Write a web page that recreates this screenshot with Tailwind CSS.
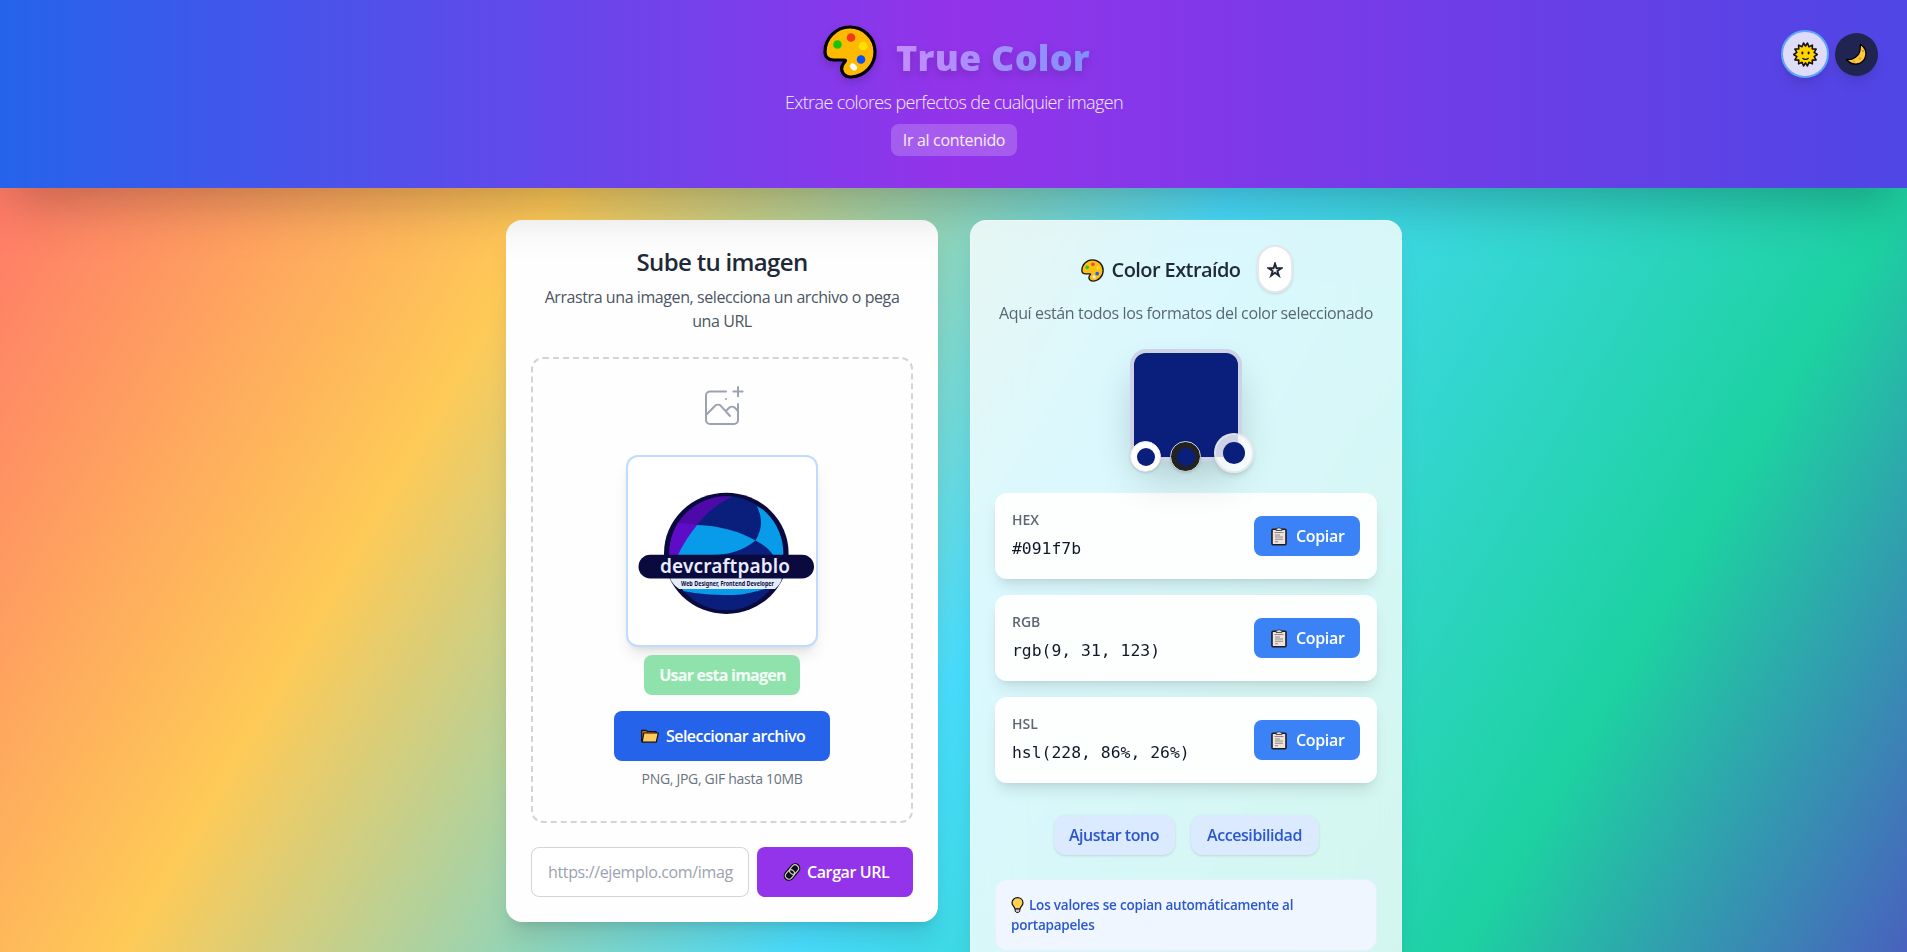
<!DOCTYPE html>
<html lang="es">
<head>
<meta charset="utf-8">
<title>True Color</title>
<script src="https://cdn.jsdelivr.net/npm/@tailwindcss/browser@4"></script>
</head>
<body class="h-[952px] overflow-hidden font-['Open_Sans','Noto_Sans',sans-serif] text-base text-[#1f2937]">
<svg class="hidden">
  <symbol id="palette" viewBox="0 0 54 54">
    <path d="M2 27A25 25 0 1 1 28 52C20 52 17 45 19.500 40C22 36 24 35 21 35H11C5 35 2 32 2 27Z" fill="#ffb900" stroke="#000" stroke-width="3.2" stroke-linejoin="round"/>
    <circle cx="14.500" cy="19.500" r="4.300" fill="#16c60c"/><circle cx="28" cy="12.500" r="4.300" fill="#f03a17"/><circle cx="40" cy="21" r="4.300" fill="#ffe000"/><circle cx="38" cy="34.500" r="4.300" fill="#0a50f0"/><ellipse cx="30.500" cy="42" rx="4" ry="3" transform="rotate(45 30.500 42)" fill="#fff"/>
  </symbol>
  <symbol id="clipboard" viewBox="0 0 16 19">
    <rect x="1" y="2.200" width="14" height="15.600" rx="1" fill="#f0e2d6" stroke="#1c1c22" stroke-width="1.600"/>
    <path d="M5 3.500V2.200Q6 2 6.600 1.200Q8 .1 9.400 1.200Q10 2 11 2.200V3.500Z" fill="#d8d8d8" stroke="#333" stroke-width=".8"/>
    <path d="M3.500 5.500H12.500M4 8H9M4 10H12M4 12.300H12M4 14.700H7" stroke="#8a8a92" stroke-width="1.100"/>
  </symbol>
</svg>
<div class="h-[952px] overflow-hidden bg-[linear-gradient(120deg,#ff6b6b_0%,#feca57_25%,#48dbfb_50%,#1dd1a1_75%,#5f27cd_100%)] bg-[size:100%_1350px] bg-no-repeat">
  <header class="relative flex h-[188px] flex-col items-center bg-[linear-gradient(90deg,#2563eb,#9333ea,#4f46e5)] pt-[25px] shadow-[0_25px_50px_-12px_rgba(0,0,0,0.25)]">
    <div class="flex items-center gap-[19px] pl-[6px]">
      <svg class="size-[54px] drop-shadow-lg"><use href="#palette"/></svg>
      <h1 class="bg-linear-to-r from-[#c48cff] to-[#7f90fb] bg-clip-text pt-3 text-4xl font-black tracking-[0.23px] text-transparent drop-shadow-lg">True Color</h1>
    </div>
    <p class="mt-[9px] pl-px text-lg leading-7 font-light tracking-[-0.62px] text-white/90">Extrae colores perfectos de cualquier imagen</p>
    <a class="mt-2 flex h-8 w-[126px] items-center justify-center rounded-lg bg-white/20 pl-px font-medium tracking-[-0.33px] text-white/90">Ir al contenido</a>
    <div class="absolute top-[30px] right-[29px] flex items-center gap-[6px]">
      <button class="flex size-12 items-center justify-center rounded-full border-2 border-[#60a5fa] bg-[#dedcf9] shadow-lg">
        <svg class="size-[25px]" viewBox="-12 -12 24 24">
          <path d="M0-8 1.900-11 3.300-7.500 6.600-9 6.500-5.400 10.200-5.200 8.300-2 11.300 0 8.300 2 10.200 5.200 6.500 5.400 6.600 9 3.300 7.500 1.900 11 0 8-1.900 11-3.300 7.500-6.600 9-6.500 5.400-10.200 5.200-8.300 2-11.300 0-8.300-2-10.200-5.200-6.500-5.400-6.600-9-3.300-7.500-1.900-11Z" fill="#ffd400" stroke="#111" stroke-width="1.500" stroke-linejoin="round"/>
          <ellipse cx="-3" cy="-1.500" rx="1" ry="1.400" fill="#111"/><ellipse cx="3" cy="-1.500" rx="1" ry="1.400" fill="#111"/><path d="M-3 3.500Q0 6 3 3.500" fill="none" stroke="#111" stroke-width="1.200"/>
        </svg>
      </button>
      <button class="flex size-[43px] items-center justify-center rounded-full bg-[#1f2450] shadow-lg">
        <svg class="size-[23px]" viewBox="0 0 23 23"><path d="M15.500 1.500C20 4 22.500 9.500 20 15C17 21.500 8 24 1.500 16.500C8 17.500 14.500 12.500 15 7Q15.200 4 15.500 1.500Z" fill="#ffc83d" stroke="#000" stroke-width="1.300" stroke-linejoin="round"/><circle cx="18" cy="8" r="1.200" fill="#e89a20"/><circle cx="15" cy="15.500" r="1.500" fill="#f0a52a"/><circle cx="9" cy="18.500" r="1.200" fill="#f0a52a"/></svg>
      </button>
    </div>
  </header>

  <main class="ml-[506px] grid w-[896px] grid-cols-2 gap-8 pt-8">
    <section class="flex h-[702px] flex-col items-center rounded-2xl border border-white/60 bg-[#fefefe] bg-clip-border p-6 shadow-xl">
      <h2 class="h-8 pt-px text-2xl leading-8 font-semibold tracking-[-0.67px]">Sube tu imagen</h2>
      <p class="mt-2 text-center leading-6 tracking-[-0.42px] text-[#4b5563]">Arrastra una imagen, selecciona un archivo o pega<br>una URL</p>
      <div class="mt-6 flex h-[466px] w-full flex-col items-center rounded-xl border-2 border-dashed border-[#d1d5db] p-6">
        <svg class="size-12 shrink-0 text-[#9ca3af]" viewBox="0 0 24 24" fill="none" stroke="currentColor" stroke-width="1" stroke-linecap="round" stroke-linejoin="round"><path d="M4 16l4.586-4.586a2 2 0 012.828 0L16 16.500M14 14l1.586-1.586a2 2 0 012.828 0L20 14M14 8h.01M6 20.500h12a2 2 0 002-2V10.500M14 4.300H6a2 2 0 00-2 2v12.200a2 2 0 002 2M17.700 4.300h4.600M20 2v4.600"/></svg>
        <div class="mt-6 size-48 shrink-0 rounded-xl border-2 border-[#bfdbfe] bg-white shadow-lg">
          <svg class="size-full" viewBox="628 457 188 188">
            <clipPath id="disc"><circle cx="726.300" cy="553.300" r="57"/></clipPath>
            <ellipse cx="726.300" cy="553.300" rx="62.300" ry="60.600" fill="#0b0a3f"/>
            <g clip-path="url(#disc)">
              <rect x="660" y="490" width="130" height="130" fill="#0a1f7c"/>
              <path d="M660 490H748C725 498 708 510 697 525Q685 540 678 560H660Z" fill="#4d0aa9"/>
              <path d="M660 523Q680 522 697 525Q685 540 678 560H660Z" fill="#5f0cc8"/>
              <path d="M697 525Q730 526 755.500 540.500Q738 555 712 555H678Q685 540 697 525Z" fill="#089bea"/>
              <path d="M756.700 506Q785 520 788 555H773Q768 547 755.500 540.500Q766 523 756.700 506Z" fill="#089bea"/>
              <path d="M672 588Q700 597 742 594.500Q755 592 768 588Z" fill="#089bea"/>
            </g>
            <path d="M670 578H782Q781 584 775 589H679Q672 584 670 578Z" fill="#e4edfb"/>
            <rect x="638.500" y="554.800" width="175.500" height="23.700" rx="11.800" fill="#0b0a3f"/>
            <text x="660" y="572.800" textLength="130" lengthAdjust="spacing" class="font-['Noto_Sans'] text-[19px] font-semibold" fill="#e8ecff">devcraftpablo</text>
            <text x="681" y="586" textLength="93" lengthAdjust="spacingAndGlyphs" class="font-['Noto_Sans'] text-[6.2px] font-bold" fill="#0b0a3f">Web Designer, Frontend Developer</text>
          </svg>
        </div>
        <button class="mt-2 h-10 w-[156px] shrink-0 rounded-lg bg-[#8fe2ab] pl-px font-bold tracking-[-0.75px] text-white/90">Usar esta imagen</button>
        <button class="mt-4 flex h-[50px] w-[216px] shrink-0 items-center rounded-lg bg-[#2563eb] pl-[27px] font-semibold tracking-[-0.54px] text-white">
          <svg class="mr-[7px] h-[14px] w-[18px]" viewBox="0 0 18 14"><path d="M.7 12.500V1.300H5L6.500 2.500H15V4" fill="#d8690c" stroke="#111" stroke-width="1.200"/><path d="M1.200 13.200 2.800 4H17.300L15.300 13.200Z" fill="#ffc860" stroke="#111" stroke-width="1.200" stroke-linejoin="round"/></svg>Seleccionar archivo</button>
        <p class="mt-2 text-sm tracking-[-0.3px] text-[#6b7280]">PNG, JPG, GIF hasta 10MB</p>
      </div>
      <div class="mt-6 flex w-full gap-2">
        <div class="flex h-[50px] w-[218px] items-center overflow-hidden rounded-lg border border-[#d1d5db] bg-white pl-4 tracking-[-0.36px] text-[#9ca3af]">https://ejemplo.com/imag</div>
        <button class="flex h-[50px] w-[156px] items-center rounded-lg bg-[#9333ea] pl-[26px] font-semibold tracking-[-0.4px] text-white">
          <svg class="mr-[6px] size-[18px]" viewBox="0 0 18 18" fill="none"><g transform="rotate(-50 9 9)"><rect x="-1" y="3.800" width="20" height="10.400" rx="5.200" fill="#111"/><rect x=".8" y="5.500" width="10" height="7" rx="3.500" stroke="#d8d8d8" stroke-width="1.100"/><rect x="7.200" y="5.500" width="10" height="7" rx="3.500" stroke="#d8d8d8" stroke-width="1.100"/></g></svg>Cargar URL</button>
      </div>
    </section>

    <section class="flex h-[800px] flex-col items-center rounded-2xl border border-white/30 bg-white/80 p-6 shadow-xl backdrop-blur-xl">
      <div class="flex h-12 items-center pl-[2px]">
        <svg class="mr-2 size-[23px] translate-y-px opacity-90"><use href="#palette"/></svg>
        <h2 class="pt-[2px] text-xl font-semibold tracking-[-0.58px]">Color Extraído</h2>
        <button class="ml-[17px] flex h-12 w-9 items-center justify-center rounded-full border-2 border-[#e5e7eb] bg-white shadow-sm">
          <svg class="size-4 translate-y-px" viewBox="0 0 16 16"><path d="M8 1.600 9.500 6.200H14.300L10.400 9 11.900 13.700 8 10.800 4.100 13.700 5.600 9 1.700 6.200H6.500Z" fill="none" stroke="#1f2937" stroke-width="1.900"/></svg>
        </button>
      </div>
      <p class="mt-2 leading-6 tracking-[-0.36px] whitespace-nowrap text-[#4b5563]/90">Aquí están todos los formatos del color seleccionado</p>
      <div class="relative mt-6 size-28 shrink-0 rounded-2xl border-4 border-white/80 bg-[#091f7b] shadow-[0_20px_40px_-6px_rgba(0,0,0,0.2)]">
        <span class="absolute -left-[4px] top-[88px] flex size-[31px] items-center justify-center rounded-full border border-[#e5e7eb] bg-white shadow"><i class="size-[18px] rounded-full bg-[#091f7b]"></i></span>
        <span class="absolute left-[36px] top-[88px] flex size-[31px] items-center justify-center rounded-full border border-[#d1d5db] bg-[#222222] shadow"><i class="size-[18px] rounded-full bg-[#091f7b]"></i></span>
        <span class="absolute left-[80px] top-[80px] flex size-[40px] items-center justify-center rounded-full border-2 border-[#e5e7eb]/90 bg-white/80 shadow-md"><i class="size-[22px] rounded-full bg-[#091f7b]"></i></span>
      </div>
      <div class="mt-8 flex w-full flex-col gap-4">
        <div class="flex h-[86px] items-center justify-between rounded-xl border border-white/60 bg-white/95 px-4 shadow-lg">
          <div><div class="text-sm font-semibold text-[#4b5563]/90">HEX</div><div class="mt-1 pt-px font-['DejaVu_Sans_Mono'] text-[16.4px] leading-[27px] text-[#111827]">#091f7b</div></div>
          <button class="flex h-10 w-[106px] items-center rounded-lg bg-[#3b82f6] pl-[17px] font-semibold tracking-[-0.34px] text-white"><svg class="mr-[9px] h-[19px] w-4"><use href="#clipboard"/></svg>Copiar</button>
        </div>
        <div class="flex h-[86px] items-center justify-between rounded-xl border border-white/60 bg-white/95 px-4 shadow-lg">
          <div><div class="text-sm font-semibold text-[#4b5563]/90">RGB</div><div class="mt-1 pt-px font-['DejaVu_Sans_Mono'] text-[16.4px] leading-[27px] text-[#111827]">rgb(9, 31, 123)</div></div>
          <button class="flex h-10 w-[106px] items-center rounded-lg bg-[#3b82f6] pl-[17px] font-semibold tracking-[-0.34px] text-white"><svg class="mr-[9px] h-[19px] w-4"><use href="#clipboard"/></svg>Copiar</button>
        </div>
        <div class="flex h-[86px] items-center justify-between rounded-xl border border-white/60 bg-white/95 px-4 shadow-lg">
          <div><div class="text-sm font-semibold text-[#4b5563]/90">HSL</div><div class="mt-1 pt-px font-['DejaVu_Sans_Mono'] text-[16.4px] leading-[27px] text-[#111827]">hsl(228, 86%, 26%)</div></div>
          <button class="flex h-10 w-[106px] items-center rounded-lg bg-[#3b82f6] pl-[17px] font-semibold tracking-[-0.34px] text-white"><svg class="mr-[9px] h-[19px] w-4"><use href="#clipboard"/></svg>Copiar</button>
        </div>
      </div>
      <div class="mt-8 flex gap-4">
        <button class="h-10 w-[121px] rounded-xl bg-[#dbeafe] font-semibold tracking-[-0.47px] text-[#2b58cc] shadow-sm">Ajustar tono</button>
        <button class="h-10 w-[128px] rounded-xl bg-[#dbeafe] font-semibold tracking-[-0.42px] text-[#2b58cc] shadow-sm">Accesibilidad</button>
      </div>
      <div class="mt-6 h-[72px] w-full shrink-0 rounded-xl border border-[#e6f0fd] bg-[#eff6ff] p-[15px] text-[13.500px] leading-5 font-semibold tracking-[-0.22px] text-[#2b58cc]">
        <svg class="mr-[5px] inline h-4 w-[13px] align-[-3px]" viewBox="0 0 13 16"><path d="M6.500.7C3.300.7 1 3 1 6C1 8.500 3.500 9.500 4 12H9C9.500 9.500 12 8.500 12 6C12 3 9.700.7 6.500.7Z" fill="#ffcf55" stroke="#111" stroke-width="1.200"/><path d="M4.200 12H8.800V14.300L7.500 15.400H5.500L4.200 14.300Z" fill="#ccc" stroke="#111"/></svg>Los valores se copian automáticamente al<br>portapapeles
      </div>
    </section>
  </main>
</div>
</body>
</html>
